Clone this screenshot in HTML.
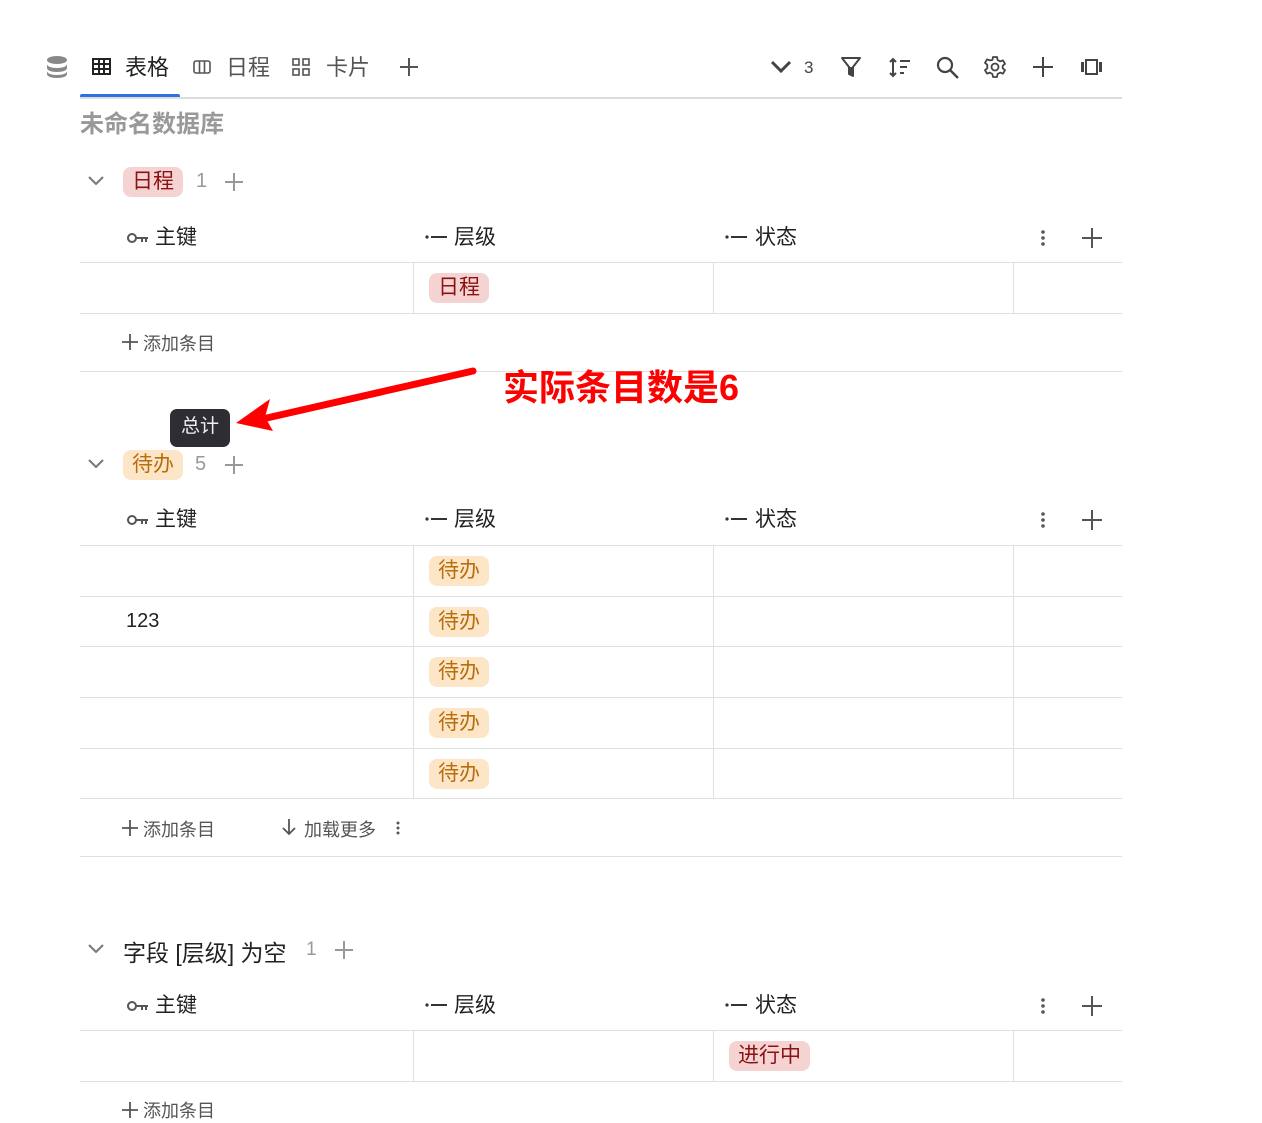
<!DOCTYPE html>
<html><head><meta charset="utf-8"><style>
*{margin:0;padding:0;box-sizing:border-box}
body{width:1262px;height:1103px;overflow:hidden;background:#fff;position:relative;font-family:"Liberation Sans","Noto Sans CJK SC",sans-serif;color:#222}
.a{position:absolute;white-space:nowrap}
.hl{position:absolute;left:80px;width:1042px;height:1px;background:#e0e0e0}
.vl{position:absolute;width:1px;background:#e0e0e0}
.t{font-size:21px;line-height:24px}
.tag{position:absolute;height:30px;line-height:30px;padding:0 9px;border-radius:8px;font-size:21px}
.red{background:#f6d3d3;color:#8b1212}
.org{background:#fde5c7;color:#b86e0b}
.g{color:#999}
svg{position:absolute}
</style></head><body>
<svg style="left:46px;top:55px" width="22" height="24" viewBox="0 0 22 24"><ellipse cx="11" cy="5" rx="10" ry="4" fill="#888"/><path d="M1 9c0 2.5 4.5 4 10 4s10-1.5 10-4v4c0 2.5-4.5 4-10 4S1 15.5 1 13z" fill="#888"/><path d="M1 16c0 2.5 4.5 4 10 4s10-1.5 10-4v3c0 2.5-4.5 4-10 4S1 21.5 1 19z" fill="#888"/></svg>
<svg style="left:92px;top:58px" width="19" height="17" viewBox="0 0 19 17"><rect x="1" y="1" width="17" height="15" fill="none" stroke="#222" stroke-width="2"/><path d="M1 6h17M1 11h17M7 1v15M12 1v15" stroke="#222" stroke-width="2"/></svg>
<div class="a t" style="left:125px;top:56px;font-size:22px">表格</div>
<div class="a" style="left:80px;top:94px;width:100px;height:4px;background:#2f6fe0;border-radius:2px"></div>
<svg style="left:193px;top:60px" width="18" height="14" viewBox="0 0 18 14"><rect x="1" y="1" width="16" height="12" rx="2" fill="none" stroke="#555" stroke-width="1.6"/><path d="M6.5 1v12M11.5 1v12" stroke="#555" stroke-width="1.6"/></svg>
<div class="a t" style="left:226px;top:56px;font-size:22px;color:#555">日程</div>
<svg style="left:292px;top:58px" width="19" height="18" viewBox="0 0 19 18"><g fill="none" stroke="#555" stroke-width="1.6"><rect x="1" y="1" width="6" height="6"/><rect x="11" y="1" width="6" height="6"/><rect x="1" y="11" width="6" height="6"/><rect x="11" y="11" width="6" height="6"/></g></svg>
<div class="a t" style="left:326px;top:56px;font-size:22px;color:#555">卡片</div>
<svg style="left:399px;top:57px" width="20" height="20"><path d="M10 1v18M1 10h18" stroke="#555" stroke-width="2"/></svg>
<svg style="left:770px;top:60px" width="22" height="14"><path d="M2 2l9 9 9-9" fill="none" stroke="#444" stroke-width="3"/></svg>
<div class="a" style="left:804px;top:58px;font-size:17px;color:#444">3</div>
<svg style="left:840px;top:56px" width="22" height="22"><path d="M2 2h18l-7 9v9l-4-2v-7z" fill="none" stroke="#444" stroke-width="2" stroke-linejoin="round"/><path d="M9 11v7l4 2v-9z" fill="#444"/></svg>
<svg style="left:888px;top:57px" width="24" height="22"><path d="M5 2v17M2 5l3-3 3 3M2 16l3 3 3-3" fill="none" stroke="#444" stroke-width="2"/><path d="M12 4h10M12 10h7M12 16h4" stroke="#444" stroke-width="2"/></svg>
<svg style="left:936px;top:56px" width="24" height="24"><circle cx="9" cy="9" r="7" fill="none" stroke="#444" stroke-width="2.2"/><path d="M14 14l8 8" stroke="#444" stroke-width="2.4"/></svg>
<svg style="left:984px;top:56px" width="22" height="22" viewBox="0 0 22 22"><path d="M9 1h4l.6 3 2.5 1.4 2.9-1 2 3.4-2.3 2v2.4l2.3 2-2 3.4-2.9-1L13.6 18 13 21H9l-.6-3-2.5-1.4-2.9 1-2-3.4 2.3-2V8.8L1 6.8l2-3.4 2.9 1L8.4 4z" fill="none" stroke="#444" stroke-width="1.8" stroke-linejoin="round"/><circle cx="11" cy="11" r="3.5" fill="none" stroke="#444" stroke-width="1.8"/></svg>
<svg style="left:1032px;top:56px" width="22" height="22"><path d="M11 1v20M1 11h20" stroke="#444" stroke-width="2"/></svg>
<svg style="left:1080px;top:59px" width="23" height="16"><rect x="1" y="3" width="3" height="10" fill="#444"/><rect x="6" y="1" width="11" height="14" fill="none" stroke="#444" stroke-width="2"/><rect x="19" y="3" width="3" height="10" fill="#444"/></svg>
<div class="hl" style="top:97px;background:#ddd;height:2px"></div>
<div class="a" style="left:80px;top:104px;font-size:24px;font-weight:bold;color:#999">未命名数据库</div>

<svg style="left:87px;top:175px" width="18" height="12"><path d="M2 2l7 7 7-7" fill="none" stroke="#777" stroke-width="2"/></svg>
<div class="tag red" style="left:123px;top:167px">日程</div>
<div class="a g" style="left:196px;top:170px;font-size:20px">1</div>
<svg style="left:224px;top:172px" width="20" height="20"><path d="M10 1v18M1 10h18" stroke="#999" stroke-width="2"/></svg>
<svg style="left:127px;top:232px" width="22" height="12"><circle cx="5" cy="6" r="4" fill="none" stroke="#555" stroke-width="2"/><path d="M9 6h12M15 6v4M19 6v4" stroke="#555" stroke-width="2"/></svg>
<div class="a t" style="left:155px;top:226px">主键</div>
<svg style="left:425px;top:231px" width="24" height="12"><circle cx="2" cy="6" r="1.6" fill="#333"/><path d="M6 6h16" stroke="#333" stroke-width="2"/></svg>
<div class="a t" style="left:454px;top:226px">层级</div>
<svg style="left:725px;top:231px" width="24" height="12"><circle cx="2" cy="6" r="1.6" fill="#333"/><path d="M6 6h16" stroke="#333" stroke-width="2"/></svg>
<div class="a t" style="left:755px;top:226px">状态</div>
<svg style="left:1040px;top:229px" width="6" height="18"><circle cx="3" cy="3" r="1.8" fill="#555"/><circle cx="3" cy="9" r="1.8" fill="#555"/><circle cx="3" cy="15" r="1.8" fill="#555"/></svg>
<svg style="left:1081px;top:227px" width="22" height="22"><path d="M11 1v20M1 11h20" stroke="#555" stroke-width="2"/></svg>
<div class="hl" style="top:262px"></div>
<div class="vl" style="left:413px;top:262px;height:51px"></div>
<div class="vl" style="left:713px;top:262px;height:51px"></div>
<div class="vl" style="left:1013px;top:262px;height:51px"></div>
<div class="tag red" style="left:429px;top:273px">日程</div>
<div class="hl" style="top:313px"></div>
<svg style="left:121px;top:333px" width="18" height="18"><path d="M9 1v16M1 9h16" stroke="#555" stroke-width="1.8"/></svg>
<div class="a" style="left:143px;top:330px;font-size:18px;color:#555">添加条目</div>
<div class="hl" style="top:371px"></div>

<svg style="left:230px;top:360px" width="260" height="80"><path d="M243 11L28 60" stroke="#f00" stroke-width="7" stroke-linecap="round"/><path d="M6 63l34-24-5 18 8 14z" fill="#f00"/></svg>
<div class="a" style="left:503px;top:368px;font-size:36px;font-weight:bold;color:#f00;line-height:40px">实际条目数是6</div>
<div class="a" style="left:170px;top:409px;width:60px;height:38px;background:#2e2d33;border-radius:7px;color:#eee;font-size:19px;line-height:36px;text-align:center">总计</div>

<svg style="left:87px;top:458px" width="18" height="12"><path d="M2 2l7 7 7-7" fill="none" stroke="#777" stroke-width="2"/></svg>
<div class="tag org" style="left:123px;top:450px">待办</div>
<div class="a g" style="left:195px;top:453px;font-size:20px">5</div>
<svg style="left:224px;top:455px" width="20" height="20"><path d="M10 1v18M1 10h18" stroke="#999" stroke-width="2"/></svg>
<svg style="left:127px;top:514px" width="22" height="12"><circle cx="5" cy="6" r="4" fill="none" stroke="#555" stroke-width="2"/><path d="M9 6h12M15 6v4M19 6v4" stroke="#555" stroke-width="2"/></svg>
<div class="a t" style="left:155px;top:508px">主键</div>
<svg style="left:425px;top:513px" width="24" height="12"><circle cx="2" cy="6" r="1.6" fill="#333"/><path d="M6 6h16" stroke="#333" stroke-width="2"/></svg>
<div class="a t" style="left:454px;top:508px">层级</div>
<svg style="left:725px;top:513px" width="24" height="12"><circle cx="2" cy="6" r="1.6" fill="#333"/><path d="M6 6h16" stroke="#333" stroke-width="2"/></svg>
<div class="a t" style="left:755px;top:508px">状态</div>
<svg style="left:1040px;top:511px" width="6" height="18"><circle cx="3" cy="3" r="1.8" fill="#555"/><circle cx="3" cy="9" r="1.8" fill="#555"/><circle cx="3" cy="15" r="1.8" fill="#555"/></svg>
<svg style="left:1081px;top:509px" width="22" height="22"><path d="M11 1v20M1 11h20" stroke="#555" stroke-width="2"/></svg>
<div class="hl" style="top:545px"></div>
<div class="vl" style="left:413px;top:545px;height:253px"></div>
<div class="vl" style="left:713px;top:545px;height:253px"></div>
<div class="vl" style="left:1013px;top:545px;height:253px"></div>
<div class="tag org" style="left:429px;top:556px">待办</div>
<div class="hl" style="top:596px"></div>
<div class="a t" style="left:126px;top:609px;color:#222;font-size:20px">123</div>
<div class="tag org" style="left:429px;top:607px">待办</div>
<div class="hl" style="top:646px"></div>
<div class="tag org" style="left:429px;top:657px">待办</div>
<div class="hl" style="top:697px"></div>
<div class="tag org" style="left:429px;top:708px">待办</div>
<div class="hl" style="top:748px"></div>
<div class="tag org" style="left:429px;top:759px">待办</div>
<div class="hl" style="top:798px"></div>
<svg style="left:121px;top:819px" width="18" height="18"><path d="M9 1v16M1 9h16" stroke="#555" stroke-width="1.8"/></svg>
<div class="a" style="left:143px;top:816px;font-size:18px;color:#555">添加条目</div>
<svg style="left:281px;top:818px" width="16" height="18"><path d="M8 1v15M2 10l6 6 6-6" fill="none" stroke="#555" stroke-width="1.8"/></svg>
<div class="a" style="left:304px;top:816px;font-size:18px;color:#555">加载更多</div>
<svg style="left:395px;top:821px" width="6" height="14"><circle cx="3" cy="2" r="1.5" fill="#555"/><circle cx="3" cy="7" r="1.5" fill="#555"/><circle cx="3" cy="12" r="1.5" fill="#555"/></svg>
<div class="hl" style="top:856px"></div>

<svg style="left:87px;top:943px" width="18" height="12"><path d="M2 2l7 7 7-7" fill="none" stroke="#777" stroke-width="2"/></svg>
<div class="a" style="left:123px;top:934px;font-size:23px;color:#222">字段 [层级] 为空</div>
<div class="a g" style="left:306px;top:939px;font-size:19px">1</div>
<svg style="left:334px;top:940px" width="20" height="20"><path d="M10 1v18M1 10h18" stroke="#999" stroke-width="2"/></svg>
<svg style="left:127px;top:1000px" width="22" height="12"><circle cx="5" cy="6" r="4" fill="none" stroke="#555" stroke-width="2"/><path d="M9 6h12M15 6v4M19 6v4" stroke="#555" stroke-width="2"/></svg>
<div class="a t" style="left:155px;top:994px">主键</div>
<svg style="left:425px;top:999px" width="24" height="12"><circle cx="2" cy="6" r="1.6" fill="#333"/><path d="M6 6h16" stroke="#333" stroke-width="2"/></svg>
<div class="a t" style="left:454px;top:994px">层级</div>
<svg style="left:725px;top:999px" width="24" height="12"><circle cx="2" cy="6" r="1.6" fill="#333"/><path d="M6 6h16" stroke="#333" stroke-width="2"/></svg>
<div class="a t" style="left:755px;top:994px">状态</div>
<svg style="left:1040px;top:997px" width="6" height="18"><circle cx="3" cy="3" r="1.8" fill="#555"/><circle cx="3" cy="9" r="1.8" fill="#555"/><circle cx="3" cy="15" r="1.8" fill="#555"/></svg>
<svg style="left:1081px;top:995px" width="22" height="22"><path d="M11 1v20M1 11h20" stroke="#555" stroke-width="2"/></svg>
<div class="hl" style="top:1030px"></div>
<div class="vl" style="left:413px;top:1030px;height:51px"></div>
<div class="vl" style="left:713px;top:1030px;height:51px"></div>
<div class="vl" style="left:1013px;top:1030px;height:51px"></div>
<div class="tag red" style="left:729px;top:1041px">进行中</div>
<div class="hl" style="top:1081px"></div>
<svg style="left:121px;top:1101px" width="18" height="18"><path d="M9 1v16M1 9h16" stroke="#555" stroke-width="1.8"/></svg>
<div class="a" style="left:143px;top:1097px;font-size:18px;color:#555">添加条目</div>
</body></html>
